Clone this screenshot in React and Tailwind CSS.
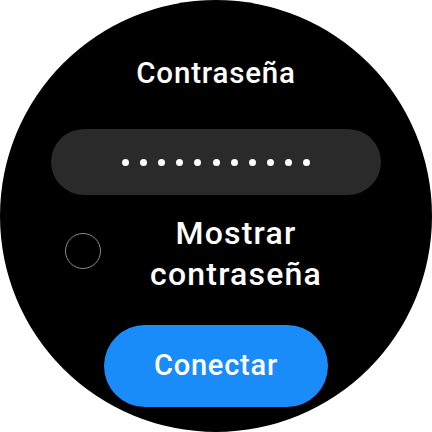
export default function App() {
  const dots = Array.from({ length: 11 })

  return (
    <div className="w-[432px] h-[432px] bg-white">
      <div
        className="w-[432px] h-[432px] rounded-full bg-black overflow-hidden flex flex-col items-center text-white"
        style={{ fontFamily: 'Roboto, "Noto Sans", sans-serif' }}
      >
        <div className="mt-[58px] h-[30px] text-[29.5px] leading-[30px] font-medium tracking-[0.8px]">Contraseña</div>

        <div className="mt-[41px] w-[330px] h-[66px] rounded-full bg-[#2a2a2a] flex items-center justify-center gap-[11.2px]">
          {dots.map((_, i) => (
            <span key={i} className="w-[7px] h-[7px] rounded-full bg-white" />
          ))}
        </div>

        <div className="mt-[18px] w-full flex items-start">
          <div className="ml-[65px] mt-[20px] w-[36px] h-[36px] rounded-full border-[1.5px] border-[#8a8a8a]" />
          <div className="ml-[31px] w-[208px] text-center text-[32px] leading-[41px] font-medium tracking-[1.2px]">
            Mostrar
            <br />
            contraseña
          </div>
        </div>

        <button className="mt-[30px] w-[224px] h-[82px] rounded-full bg-[#1a8cfa] text-white text-[29px] tracking-[0.8px] font-medium flex items-center justify-center">
          Conectar
        </button>
      </div>
    </div>
  )
}
